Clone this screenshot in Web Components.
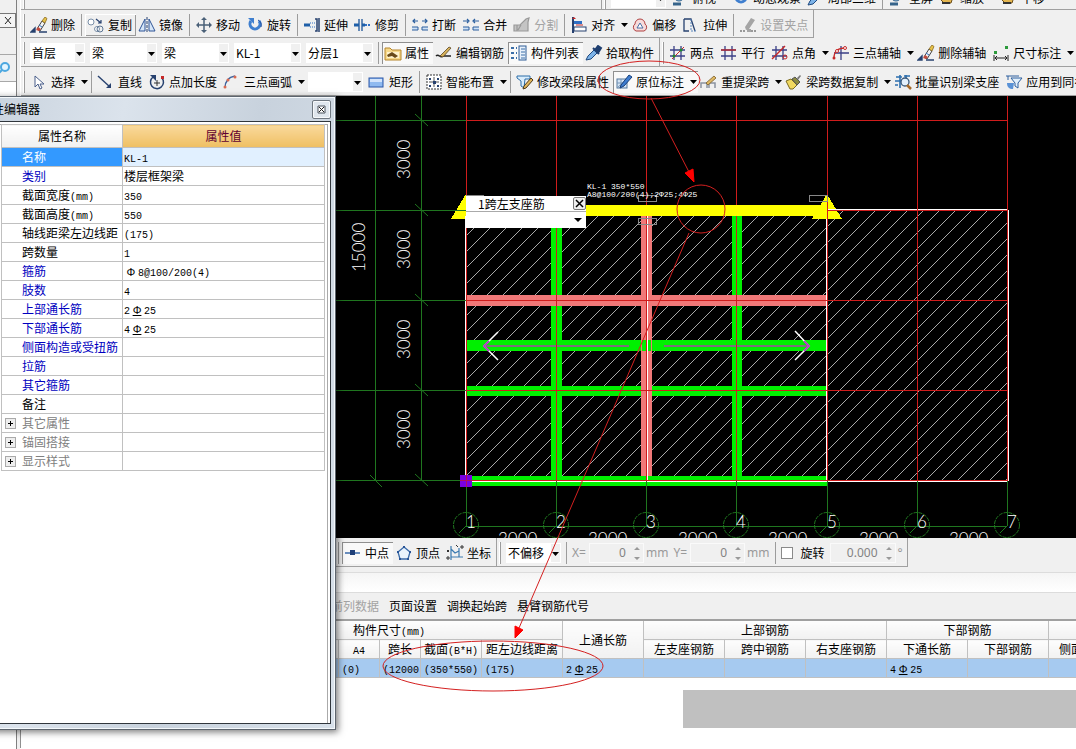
<!DOCTYPE html>
<html lang="zh-CN">
<head>
<meta charset="utf-8">
<title>属性编辑器</title>
<style>
body{margin:0;background:#fff;color:#000;font:12px/16px "Noto Sans CJK SC","Noto Sans",sans-serif}
</style>
</head>
<body>
<cad-app></cad-app>
<script>
const define=(name,html,setup)=>customElements.define(name,class extends HTMLElement{
  constructor(){super();const t=document.createElement('template');t.innerHTML=html;
    this.attachShadow({mode:'open'}).append(t.content.cloneNode(true));}
  connectedCallback(){if(!this.ready){this.ready=true;if(setup)setup.call(this,this.shadowRoot);}}
});

/* ---------- icons, all on an 18 x 16 grid ---------- */
const N='#27416f',B='#2f6fc4',R='#c62828',G='#999';
const brush=`<path d="M1 15l4-4v4zM9 15h8" fill="${N}" stroke="${N}" stroke-width="1.4"/><path d="M7 12l5-8 3 2-5 8z" fill="#f4f4f4" stroke="#444"/><path d="M12 4l3-4 2 1.500-2 4.500z" fill="#e6c34a" stroke="#8a6a20" stroke-width=".8"/><path d="M8 10l3 2-2 2-3-1z" fill="#c44a3c"/><path d="M9 8l3 2" stroke="${B}"/>`;
const hash=`<path d="M5 1v14M12 1v14M1 5h15M1 11h15" stroke="#3a3f86" stroke-width="1.300"/>`;
const ICONS={
 erase:brush,
 copy:`<circle cx="4" cy="5" r="3" fill="#fff" stroke="#7a8fa8"/><circle cx="10" cy="12" r="2.500" fill="#fff" stroke="#7a8fa8"/><circle cx="13" cy="12" r="3" fill="none" stroke="#5d7694"/><path d="M9 2l5 4M14 3v3h-3" fill="none" stroke="${N}" stroke-width="1.200"/>`,
 mirror:`<path d="M7 2v12H1zM11 2v12h6z" fill="#d6e6f8" stroke="#2f5597"/><path d="M9 0v16" stroke="#27416f" stroke-dasharray="3 1"/>`,
 move:`<path d="M9 1v14M2 8h14" stroke="#4a6078" stroke-width="1.500"/><path d="M9 0l3 3H6zM9 16l3-3H6zM1 8l3-3v6zM17 8l-3-3v6z" fill="#4a6078"/>`,
 rotate:`<path d="M5 4a5 5 0 1 0 8 0" fill="none" stroke="#3f7fcf" stroke-width="3"/><path d="M2 1h6v6z" fill="#3f7fcf"/><path d="M12 3a6 6 0 0 1 3 7" fill="none" stroke="#1f4f9f"/>`,
 extend:`<path d="M1 8h6" stroke="#1f5fa8" stroke-width="3"/><path d="M7 6h5M7 10h5" stroke="${B}" stroke-dasharray="1 1"/><path d="M12 2h2v12h-2M16 1v14" fill="none" stroke="${N}" stroke-width="1.500"/>`,
 trim:`<path d="M5 2v12M8 2v12" stroke="#2c5f9e" stroke-width="1.400"/><path d="M0 8h5M8 8h3" stroke="#1f5fa8" stroke-width="3"/><path d="M11 8h6" stroke="${B}" stroke-width="2" stroke-dasharray="2 1"/>`,
 brk:`<path d="M2 4h5M11 4h5M4 2L2 4l2 2M14 2l2 2-2 2" fill="none" stroke="#2c5f9e" stroke-width="1.200"/><path d="M1 10h6v3H1M17 10h-6v3h6" fill="#cfe2f6" stroke="#2c5f9e"/>`,
 merge:`<path d="M1 4h5M12 4h5M5 2l2 2-2 2M13 2l-2 2 2 2" fill="none" stroke="#2c5f9e" stroke-width="1.200"/><path d="M1 10h6v3H1M17 10h-6v3h6" fill="#cfe2f6" stroke="#2c5f9e"/>`,
 split:`<path d="M1 8h6l6-6 3-1-1 4v9H1zM4 8v6M8 8l-3 5" fill="#c4c4c4" stroke="${G}" stroke-width="1.200"/>`,
 align:`<path d="M3 0v16" stroke="${N}" stroke-width="2"/><path d="M2 2l2-2 2 2z" fill="${R}"/><rect x="4" y="4" width="8" height="3" fill="${B}"/><rect x="4" y="10" width="12" height="4" fill="#fff" stroke="${N}"/><path d="M6 8h7" stroke="${R}"/>`,
 offset:`<path d="M5 14a4 4 0 0 1-1-7 5 5 0 0 1 10 0 4 4 0 0 1-1 7z" fill="#f6dcdc" stroke="#b04040"/><path d="M6 11l3-5 3 5z" fill="#fff" stroke="#4a6fa5"/>`,
 stretch:`<path d="M2 2v12h5M2 2h7l4 12" fill="none" stroke="${N}" stroke-width="1.300"/><path d="M9 2v12h6" fill="none" stroke="#5b86bd" stroke-dasharray="2 1"/>`,
 grip:`<path d="M1 14h5M12 14h5" stroke="${G}" stroke-dasharray="2 1" stroke-width="2"/><path d="M6 10l6-9 4 2-6 9-3 1zM8 12h4v3H8z" fill="#a5a5a5"/>`,
 prop:`<path d="M1 3h5l2 2h9v10H1z" fill="#f7d98a" stroke="#b5852c"/><rect x="3" y="7" width="12" height="6" fill="#fff3cd"/><path d="M3 10l5-3 6 4-3 2-3-2-4 1z" fill="#6a4b1a"/>`,
 pen:`<path d="M1 11c3-3 4 3 7 0h8" fill="none" stroke="#222" stroke-width="1.500"/><path d="M5 11l9-9 2 1-8 9z" fill="#d7b25a" stroke="#5a4522" stroke-width=".8"/>`,
 list:`<path d="M1 3h3M1 8h3M1 13h3M6 3h1M6 8h1M6 13h1" stroke="#3b6ea8" stroke-width="2"/><rect x="9" y="1" width="7" height="14" fill="#e8f1fb" stroke="#2f5d96"/><path d="M11 4h4M11 7h4M11 10h4M11 13h4" stroke="#3b6ea8"/>`,
 pick:`<path d="M1 15l2-4 6-6 3 3-6 6z" fill="#7db3e8" stroke="#1f4a80"/><path d="M8 3l6 6M10 5l3-4 3 2-3 5z" fill="#1f3f70" stroke="#1f3f70" stroke-width="2"/>`,
 two:hash+`<path d="M3 14L15 2" stroke="${R}"/><circle cx="5" cy="11" r="1.500" fill="#1c8a2c"/><circle cx="12" cy="5" r="1.500" fill="#1c8a2c"/>`,
 par:hash+`<path d="M1 5h15" stroke="${R}" stroke-width="1.300"/>`,
 ang:hash+`<path d="M1 14L14 1" stroke="${R}" stroke-width="1.500"/><circle cx="14" cy="12" r="2" fill="none" stroke="${R}"/>`,
 arc3:`<path d="M9 1v14M2 8h15" stroke="#3a3f86" stroke-width="1.300"/><path d="M2 13c0-7 4-10 11-10" fill="none" stroke="${R}" stroke-width="1.300"/><circle cx="2" cy="13" r="1.500" fill="${R}"/><circle cx="13" cy="3" r="1.500" fill="#fff" stroke="${R}"/><circle cx="5" cy="6" r="1.500" fill="#fff" stroke="${R}"/>`,
 dim:`<rect x="2" y="6" width="3" height="3" fill="#2c9a3c"/><rect x="13" y="1" width="3" height="3" fill="#2c9a3c"/><path d="M2 10v6M16 10v6M3 13h12M5 11l-2 2 2 2M13 11l2 2-2 2" fill="none" stroke="#222"/>`,
 cursor:`<path d="M5 2v11l3-3 2 5 2-1-2-4h4z" fill="#fff" stroke="#4a5f8a"/>`,
 line:`<path d="M1 2l12 11" stroke="${N}" stroke-width="1.400"/><path d="M14 9v5H9z" fill="${N}"/>`,
 ptlen:`<path d="M5 3a6.500 6.500 0 1 0 9 1" fill="none" stroke="#27416f" stroke-width="1.500"/><path d="M2 1h6v6z" fill="#27416f"/><path d="M9 6v6M6 9h6" stroke="#333"/><rect x="13" y="2" width="3" height="3" fill="${R}"/>`,
 arc:`<path d="M2 14C2 7 6 3 12 2" fill="none" stroke="#3f66a0" stroke-width="1.400"/><circle cx="2" cy="13" r="1.500" fill="#d86a52"/><circle cx="5" cy="6" r="1.500" fill="#d86a52"/><circle cx="12" cy="3" r="1.500" fill="#d86a52"/>`,
 rect:`<rect x="1" y="4" width="14" height="9" fill="#8fbaf0" stroke="#2a56a8"/><path d="M2 5h12v3H2z" fill="#d3e4fb"/>`,
 smart:`<rect x="2" y="1" width="14" height="14" fill="#fff" stroke="#333" stroke-dasharray="2 1"/><path d="M9 3v10M4 8h10" stroke="#555"/><path d="M4 4h2v2H4zM12 4h2v2h-2zM4 11h2v2H4zM12 11h2v2h-2zM8 7h3v3H8z" fill="${N}"/>`,
 edit:`<path d="M1 2h13v3H9l-1 9-3-2V7L1 4z" fill="#d8ecfb" stroke="#2b6ca8"/><path d="M8 12l7-8 2 2-7 8-3 1z" fill="#e1b55a" stroke="#4c3a1a"/>`,
 insitu:`<rect x="2" y="5" width="10" height="9" fill="#d5e4f5" stroke="#55789e"/><path d="M2 14L12 5M2 9h10M6 5v9" stroke="#7797b8"/><path d="M6 11l8-10 3 2-8 9-4 2z" fill="#3d7cd0" stroke="#173f7a"/>`,
 respan:`<path d="M1 14V9h6v5M9 14V9h6v5" fill="none" stroke="#8a93a0" stroke-width="1.500"/><path d="M6 9l8-7 2 2-8 7z" fill="#dfb964" stroke="#7a5d28" stroke-width=".8"/>`,
 broom:`<path d="M1 7l5-2 6 6-4 4-3 0z" fill="#f0d860" stroke="#7a6a20"/><path d="M7 5l3-2 5 5-3 3z" fill="#8a8a40" stroke="#555"/><path d="M12 4l3-3 1 1-3 4z" fill="#777"/>`,
 batch:`<path d="M2 3h6M10 2h6M1 7h7M1 11h3M6 1v13M12 1v3" stroke="#2c6fae" stroke-width="1.600"/><circle cx="11" cy="8" r="4" fill="#e4f1fc" stroke="#39587a" stroke-width="1.300"/><path d="M13 11l4 4" stroke="#a86a28" stroke-width="2.500"/>`,
 apply:`<path d="M1 2h13M3 2v4M6 4h11l-4 5v5l-3-2V9z" fill="#e2f0fc" stroke="#2c5f9e"/><path d="M2 9l7 0-1 6c-4 0-6-2-6-6z" fill="#5a92d6"/>`,
 mid:`<path d="M1 8h15" stroke="#3a6aa8" stroke-width="1.500"/><rect x="6" y="5" width="5" height="5" fill="#1f3f78"/>`,
 vertex:`<path d="M9 2l6 5-2 7H5L3 7z" fill="#eaf3fc" stroke="#3a6aa8" stroke-width="1.300"/><path d="M8 1h2v2H8zM2 6h2v2H2zM14 6h2v2h-2zM4 13h2v2H4zM12 13h2v2h-2z" fill="#2a5597"/>`,
 coord:`<path d="M5 1v14M5 12h12M13 3v9M5 4l4 4 4-2" fill="none" stroke="#3a7ab0" stroke-width="1.200"/><path d="M1 5l2 2M3 5L1 7M10 0l2 2M1 12h2v2H1zM15 1h2v2h-2z" fill="none" stroke="#333"/>`,
 sight:`<circle cx="8" cy="6" r="5" fill="#9cc8ea" stroke="#36648b"/><path d="M2 14h8" stroke="#36648b" stroke-width="3"/>`,
 gold:`<path d="M2 10l5-6 7 3-2 6H5z" fill="#e4b650" stroke="#6b4d18"/><path d="M3 13h8" stroke="#333" stroke-width="2"/>`
};
define('ui-icon',`<style>:host{display:block;flex:none;width:18px;height:16px}svg{display:block}</style><svg width="18" height="16" fill="none" aria-hidden="true"></svg>`,
 function(s){s.querySelector('svg').innerHTML=ICONS[this.getAttribute('name')]||'';});

/* ---------- toolbar parts ---------- */
define('tool-button',`<style>
:host{display:block;flex:none}
button{display:flex;align-items:center;gap:3px;height:22px;margin:0;border:0;padding:0 4px 0 2px;background:none;color:inherit;font:inherit;white-space:nowrap}
button:disabled{color:#a3a3a3}
svg{display:none;margin-left:1px}
:host([menu]) svg{display:block}:host([menu]) button{padding-right:0}
:host([raised]) button{box-shadow:inset 1px 1px #fff,inset -1px -1px #9a9a9a}
:host([pressed]) button{background:#f9f9f9;box-shadow:inset 1px 1px #8f8f8f}
</style><button type="button"><ui-icon></ui-icon><span><slot></slot></span><svg width="10" height="6"><path d="M2 1h7L5.500 5z" fill="#000"/></svg></button>`,
 function(s){const i=document.createElement('ui-icon');i.setAttribute('name',this.getAttribute('icon'));s.querySelector('ui-icon').replaceWith(i);
  s.querySelector('button').disabled=this.hasAttribute('off');});
define('tool-select',`<style>
:host{display:grid;flex:none;width:67px;height:20px;margin:0 3px 0 2px;background:#fff}
:host([size=s]){width:55px}
select,svg{grid-area:1/1}
select{appearance:none;width:100%;min-width:0;margin:0;border:0;padding:0 12px 0 2px;background:none;color:#000;font:inherit}
svg{justify-self:end;pointer-events:none}
</style><select><option></option></select><svg width="10" height="20"><path d="M0 1h9v18H0z" fill="#f0f0f0"/><path d="M1 9h7L4.500 13z" fill="#000"/></svg>`,
 function(s){s.querySelector('select').setAttribute('aria-label',this.getAttribute('label'));s.querySelector('option').textContent=this.getAttribute('value')||'';});
define('tool-sep',`<style>:host{display:block;flex:none;width:1px;height:22px;margin:0 3px 0 2px;background:#9c9c9c}</style>`);
define('tool-bar',`<style>
:host{display:flex;flex:none;align-items:center;box-sizing:border-box;padding:2px 1px 0 3px;border-bottom:1px solid #a0a0a0;border-right:1px solid #a0a0a0}
:host([open]){flex:1 0 auto;border-right:0}
i{width:1px;height:22px;margin-right:3px;background:#9c9c9c;box-shadow:-1px 0 #fff}
</style><i></i><slot></slot>`);
define('number-box',`<style>
:host{display:grid;flex:none;width:55px;height:20px;border:1px solid #fafafa;box-sizing:border-box}
:host([wide]){width:66px}
input,svg{grid-area:1/1}
input{width:100%;min-width:0;box-sizing:border-box;border:0;margin:0;padding:0 17px 0 0;background:none;color:#838383;font:12px/16px "Noto Sans",sans-serif;text-align:right}
svg{justify-self:end}
</style><input disabled><svg width="12" height="18"><path d="M3 6l3-3 3 3zM3 13l3 3 3-3z" fill="#999"/></svg>`,
 function(s){const i=s.querySelector('input');i.value=this.getAttribute('value');i.setAttribute('aria-label',this.getAttribute('label'));});

define('top-tools',`<style>
:host{display:block;background:#f0f0f0;border-left:1px solid #fff;overflow:hidden}
div{display:flex;height:29px}
.cut{height:10px;align-items:flex-end}.cut tool-bar{height:26px}
.cut tool-bar:first-child{width:581px}
.r1{height:28px}
</style>
<div class="cut"><tool-bar></tool-bar>
<tool-bar open><tool-select size="s" label="视图"></tool-select><tool-button icon="sight" menu>俯视</tool-button><tool-button icon="rotate">动态观察</tool-button><tool-button icon="pick">局部三维</tool-button><tool-sep></tool-sep><tool-button icon="sight">全屏</tool-button><tool-button icon="gold" menu>缩放</tool-button><tool-button icon="gold" menu>平移</tool-button></tool-bar></div>
<div class="r1"><tool-bar><tool-button icon="erase">删除</tool-button><tool-sep></tool-sep><tool-button icon="copy" raised>复制</tool-button><tool-button icon="mirror">镜像</tool-button><tool-sep></tool-sep><tool-button icon="move">移动</tool-button><tool-button icon="rotate">旋转</tool-button><tool-sep></tool-sep><tool-button icon="extend">延伸</tool-button><tool-button icon="trim">修剪</tool-button><tool-sep></tool-sep><tool-button icon="brk">打断</tool-button><tool-button icon="merge">合并</tool-button><tool-button icon="split" off>分割</tool-button><tool-sep></tool-sep><tool-button icon="align" menu>对齐</tool-button><tool-button icon="offset">偏移</tool-button><tool-button icon="stretch">拉伸</tool-button><tool-sep></tool-sep><tool-button icon="grip" off>设置夹点</tool-button></tool-bar></div>
<div><tool-bar><tool-select size="s" label="楼层" value="首层"></tool-select><tool-select label="构件类别" value="梁"></tool-select><tool-select label="构件类型" value="梁"></tool-select><tool-select label="构件" value="KL-1"></tool-select><tool-select label="分层" value="分层1"></tool-select><tool-sep></tool-sep><tool-button icon="prop" pressed>属性</tool-button><tool-button icon="pen">编辑钢筋</tool-button><tool-button icon="list" pressed>构件列表</tool-button><tool-button icon="pick">拾取构件</tool-button></tool-bar>
<tool-bar open><tool-button icon="two">两点</tool-button><tool-button icon="par">平行</tool-button><tool-button icon="ang" menu>点角</tool-button><tool-button icon="arc3" menu>三点辅轴</tool-button><tool-button icon="erase">删除辅轴</tool-button><tool-button icon="dim" menu>尺寸标注</tool-button></tool-bar></div>
<div><tool-bar open><tool-button icon="cursor" menu>选择</tool-button><tool-sep></tool-sep><tool-button icon="line">直线</tool-button><tool-button icon="ptlen">点加长度</tool-button><tool-button icon="arc" menu>三点画弧</tool-button><tool-select size="s" label="半径"></tool-select><tool-button icon="rect">矩形</tool-button><tool-sep></tool-sep><tool-button icon="smart" menu>智能布置</tool-button><tool-sep></tool-sep><tool-button icon="edit">修改梁段属性</tool-button><tool-button icon="insitu" menu pressed>原位标注</tool-button><tool-button icon="respan" menu>重提梁跨</tool-button><tool-button icon="broom" menu>梁跨数据复制</tool-button><tool-button icon="batch">批量识别梁支座</tool-button><tool-button icon="apply">应用到同名梁</tool-button></tool-bar></div>`);

define('side-dock',`<style>
:host{display:flex;flex-direction:column;flex:none;width:16px;border-right:1px solid #808080;margin-right:3px;background:#fff}
header{display:flex;justify-content:flex-end;height:28px;box-sizing:border-box;padding-top:13px;background:#f0f0f0}
button{width:17px;height:15px;margin:0;padding:0;border:1px solid #777;background:#f4f4f4}
div{height:26px;background:#f0f0f0;border-bottom:1px solid #a8a8a8}
svg{display:block}
</style><header><button type="button" aria-label="关闭"><svg width="15" height="13"><path d="M5 3l6 7M11 3l-6 7" stroke="#222" fill="none"/></svg></button></header><div></div>
<div><svg width="16" height="26"><circle cx="5" cy="12" r="4" fill="#e4f5ff" stroke="#4da8e0" stroke-width="2"/><path d="M2 15l-3 3" stroke="#4da8e0" stroke-width="2"/></svg></div>`);

/* ---------- drawing area ---------- */
define('input-hint',`<style>
:host{display:block;width:120px;background:#fff}
header{display:flex;align-items:center;justify-content:space-between;height:15px;padding-left:12px;border-bottom:1px solid #aaa}
button{display:block;width:13px;height:13px;margin:0;padding:0;border:1px solid #777;border-radius:2px;background:#eee}
svg{display:block}
.v{display:grid;height:16px}.v>*{grid-area:1/1}
select{appearance:none;border:0;margin:0;background:none;font:inherit;width:100%}
.v svg{justify-self:end;align-self:center;pointer-events:none}
</style><header><label for="v">1跨左支座筋</label><button type="button" aria-label="关闭"><svg width="11" height="11"><path d="M2 2l7 7M9 2l-7 7" stroke="#000" stroke-width="1.500"/></svg></button></header>
<div class="v"><select id="v"><option></option></select><svg width="12" height="8"><path d="M0 2h8L4 6z"/></svg></div>`);
define('cad-canvas',`<style>
:host{display:block;position:relative;height:442px;background:#000;overflow:hidden}
svg{display:block;width:100%;height:442px}
input-hint{position:absolute;left:445px;top:100px}
.n{font:300 17px Lato,sans-serif;fill:#fff}
.s{font:8px "Liberation Mono",monospace;fill:#fff}
.c{shape-rendering:crispEdges}
</style><svg fill="none"></svg><input-hint></input-hint>`,function(s){
 const X=[466,556,646,736,827,917,1007],Y=[120,210,300,390,480];
 const GR='#1f761f',RD='#d01c1c';let o='',h='';
 for(let c=676+10;c<1500;c+=16)h+=`M${c-480} 480L${c-210} 210`;
 o+=`<clipPath id="slab"><path d="M466 210h542v271h-542z"/></clipPath><path class="c" clip-path="url(#slab)" d="${h}" stroke="#a8a8a8"/>`;
 o+=`<g class="c">`;
 o+=`<path d="M551 216h11v264h-11zM732 216h10v264h-10zM466 340h361v11H466zM466 386h361v10H466zM466 476h361v10H466z" fill="#00f000"/>`;
 o+=`<path d="M641 216h11v260h-11zM466 295h361v11H466z" fill="#f07878"/><path d="M642 340h9v11h-9z" fill="#00f000"/>`;
 o+=`<path d="M484 346h145M664 346h144" stroke="#7c707c" stroke-width="2"/>`;
 o+=`<path d="M466 205h361v11H466zM827 194l15 25h-30zM466 194v25h-15z" fill="#ff0"/>`;
 o+=`<path d="M465.500 216v264M647.500 216v264M826.500 219v262M1008.500 210v271M827 209.500h181M466 481.500h542" stroke="#fff"/>`;
 X.forEach((x,i)=>{const a=i>0&&i<4?`M${x}.500 96V205M${x}.500 216V480`:`M${x}.500 96V480`;
  o+=`<path d="${a}" stroke="${RD}"/><path d="M${x}.500 481V525" stroke="${GR}"/>`;});
 Y.forEach((y,i)=>{const a=i===1?`M827 ${y}.500H1008`:`M466 ${y}.500H1008`;
  o+=`<path d="${a}" stroke="${RD}"/><path d="M336 ${y}.500H466" stroke="${GR}"/>`;});
 o+=`<path d="M375.500 96V480M421.500 96V480M466 526.500H1007" stroke="${GR}"/>`;
 o+=`<path d="M638.500 195.500h18v6h-18zM638.500 218.500h18v6h-18zM809.500 195.500h18v6h-18zM466 195.500h18" stroke="#888"/>`;
 o+=`<path d="M460 475h12v12h-12z" fill="#7a00e0"/><path d="M466.500 475v12M460 480.500h12" stroke="#b01060"/></g>`;
 o+=`<path d="M498 332l-14 14 14 14M795 331l14 15-14 14" stroke="#fff" stroke-width="1.500"/><path d="M489 341l-5 5 5 5M804 341l5 5-5 5" stroke="#b040c0" stroke-width="2"/>`;
 Y.forEach(y=>o+=`<path d="M415 ${y-6}l13 12" stroke="${GR}"/>`);
 o+=`<path d="M370 475l12 12" stroke="${GR}"/>`;
 X.forEach((x,i)=>{o+=`<circle cx="${x}" cy="525" r="12.500" stroke="${GR}" stroke-dasharray="4 1"/><path d="M${x-7} 533l8-8" stroke="${GR}"/><text class="n" x="${x}" y="528">${i+1}</text>`;
  if(i<6)o+=`<text class="n" x="${x+32}" y="545">3000</text>`;});
 [179,269,359,449].forEach(y=>o+=`<text class="n" transform="translate(410 ${y}) rotate(-90)">3000</text>`);
 o+=`<text class="n" transform="translate(365 272) rotate(-90)">15000</text>`;
 o+=`<text class="s" x="587" y="189">KL-1 350*550</text><text class="s" x="587" y="197">A8@100/200(4);2Φ25;4Φ25</text>`;
 s.querySelector('svg').innerHTML=`<g transform="translate(-21 -96)">${o}</g>`;
});

/* ---------- snapping bar ---------- */
define('snap-bar',`<style>
:host{display:flex;height:29px;padding-left:314px;background:#f0f0f0;color:#000}
tool-bar{height:29px}
.g{color:#999;font-family:"Noto Sans",sans-serif;margin:0 3px 0 2px}
label{display:flex;align-items:center;gap:8px;margin:0 5px 0 2px}
input{appearance:none;width:12px;height:12px;margin:0;border:1px solid #8a8a8a;background:#fff}
</style><tool-bar><tool-button icon="mid" pressed>中点</tool-button><tool-button icon="vertex">顶点</tool-button><tool-button icon="coord">坐标</tool-button></tool-bar>
<tool-bar><tool-select size="s" label="偏移方式" value="不偏移"></tool-select><tool-sep></tool-sep><span class="g">X=</span><number-box label="X" value="0"></number-box><span class="g">mm</span><span class="g">Y=</span><number-box label="Y" value="0"></number-box><span class="g">mm</span><tool-sep></tool-sep><label><input type="checkbox">旋转</label><number-box wide label="角度" value="0.000"></number-box><span class="g">°</span></tool-bar>`);

/* ---------- text helper: half-width runs use the mono face ---------- */
const fmt=t=>t.replace(/[\x20-\x7e]+|Φ|ф/g,m=>m==='Φ'?'<span class="f">Φ</span>':m==='ф'?'<span class="f"><u>Φ</u></span>':`<span class="m">${m}</span>`);
const RUNS=`.m{font:10px/10px "Liberation Mono",monospace}.f{display:inline-block;width:14px;text-align:center;font:11px/12px "Liberation Sans",sans-serif}u{text-underline-offset:1px}`;

define('span-panel',`<style>
:host{display:block;overflow:hidden}
.gap{height:5px;background:#f0f0f0;border-bottom:1px solid #dcdcdc}
.tabs{height:19px;background:linear-gradient(#f5f5f5,#fff);border-bottom:1px solid #dcdcdc}
nav{display:flex;align-items:center;gap:10px;height:26px;padding-left:310px;background:#f0f0f0;border-bottom:2px solid #a0a0a0}
nav button{border:0;margin:0;padding:0;background:none;color:#000;font:inherit}
nav button:disabled{color:#a3a3a3}
table{width:1109px;border-collapse:collapse;table-layout:fixed}
th,td{height:18px;padding:0;border:1px solid #c0c0c0;border-top:0;font-weight:400;line-height:18px;white-space:nowrap;overflow:hidden}
th{background:linear-gradient(#fdfdfd,#f1f1f1)}
td{background:#a6caf0;padding-left:3px}
footer{height:38px;margin:12px 0 20px 662px;background:#c0c0c0}
${RUNS}</style><div class="gap"></div><div class="tabs"></div>
<nav><button type="button" disabled>前列数据</button><button type="button">页面设置</button><button type="button">调换起始跨</button><button type="button">悬臂钢筋代号</button></nav>
<table></table><footer></footer>`,function(s){
 const w=[194,41,41,41,41,41,61,81,81,81,81,81,81,81,81];
 const th=(t,a='')=>`<th ${a}>${fmt(t)}</th>`;
 s.querySelector('table').innerHTML=`<colgroup>${w.map(x=>`<col style="width:${x}px">`).join('')}</colgroup><thead><tr>${th('','rowspan="2"')}${th('构件尺寸(mm)','colspan="7"')}${th('上通长筋','rowspan="2"')}${th('上部钢筋','colspan="3"')}${th('下部钢筋','colspan="2"')}${th('')}</tr><tr>${['','','','A4','跨长','截面(B*H)','距左边线距离','左支座钢筋','跨中钢筋','右支座钢筋','下通长筋','下部钢筋','侧面通长筋'].map(t=>th(t)).join('')}</tr></thead><tbody><tr>${['','','','','(0)','(12000','(350*550)','(175)','2ф25','','','','4ф25','',''].map(t=>`<td>${fmt(t)}</td>`).join('')}</tr></tbody>`;
});

/* ---------- floating property editor ---------- */
define('property-window',`<style>
:host{display:block;box-sizing:border-box;width:348px;height:634px;padding:0 4px 4px 0;border:1px solid #5d656e;background:linear-gradient(100deg,#c9d3de,#dbe3ec 30%,#c8d2dd 60%,#d8e1ea);box-shadow:inset 0 0 0 1px #f4f8fb,2px 2px 7px #0008}
header{display:flex;align-items:center;justify-content:space-between;height:24px;padding-left:3px}
button{width:19px;height:19px;margin:0;padding:0;border:1px solid #6f7881;border-radius:2px;background:#dfe6ed;box-shadow:inset 0 0 0 1px #f6f8fa}
svg{display:block;margin:auto}
section{box-sizing:border-box;height:603px;padding:2px 2px 0 11px;border:1px solid #30363c;box-shadow:inset -2px 2px #fff,inset -3px 3px #aaa;background:#fff}
table{width:324px;border-collapse:collapse;table-layout:fixed}
th{height:22px;padding:0;border:1px solid #c0c0c0;font-weight:400;background:linear-gradient(#fff,#f0f0f0)}
th+th{background:linear-gradient(#f9d99c,#efbf62);color:#600030}
td{height:18px;padding:0 0 0 1px;border:1px solid #c0c0c0;line-height:18px;white-space:nowrap;overflow:hidden}
td.k{padding-left:20px}
.b{color:#0000c0}.d{color:#808080}
tr.on .k{background:#3399ff;color:#fff}tr.on td{background:#e1f0ff}
.d i{display:inline-block;box-sizing:border-box;width:11px;height:11px;margin:0 6px 0 -17px;border:1px solid #aaa;background:linear-gradient(#000,#000) 2px 4px/5px 1px no-repeat,linear-gradient(#000,#000) 4px 2px/1px 5px no-repeat,#eee;vertical-align:-1px}
${RUNS}</style><header><span>性编辑器</span><button type="button" aria-label="关闭"><svg width="9" height="9"><path d="M1 1h7v7H1z" stroke="#4a535c" fill="#fff"/><path d="M2 2l5 5M7 2L2 7" stroke="#222"/></svg></button></header>
<section><table></table></section>`,function(s){
 const rows=[['名称','KL-1','on'],['类别','楼层框架梁','b'],['截面宽度(mm)','350'],['截面高度(mm)','550'],['轴线距梁左边线距',' (175)'],['跨数量','1'],['箍筋','Φ8@100/200(4)','b'],['肢数','4','b'],['上部通长筋','2ф25','b'],['下部通长筋','4ф25','b'],['侧面构造或受扭筋','','b'],['拉筋','','b'],['其它箍筋','','b'],['备注',''],['其它属性','','d'],['锚固搭接','','d'],['显示样式','','d']];
 s.querySelector('table').innerHTML=`<colgroup><col style="width:121px"><col></colgroup><thead><tr><th>属性名称</th><th>属性值</th></tr></thead><tbody>${rows.map(([k,v,c=''])=>`<tr class="${c==='on'?c:''}"><td class="k ${c}">${c==='d'?'<i></i>':''}${fmt(k)}</td><td>${fmt(v)}</td></tr>`).join('')}</tbody>`;
});

/* ---------- red guide marks over the page ---------- */
define('guide-marks',`<style>:host{display:block;pointer-events:none}svg{display:block}</style>
<svg width="760" height="749" fill="none" stroke="#d42020"><ellipse cx="649" cy="80" rx="51" ry="19"/><path d="M651 98l38 74"/><circle cx="701" cy="209" r="24"/><path d="M689 233L519 628"/><ellipse cx="493" cy="666" rx="110" ry="25"/><path d="M694 182l-9-9 8-4zM515 638l0-12 8 4z" fill="#f00" stroke="#f00"/></svg>`);

define('cad-app',`<style>
:host{display:flex;position:relative;min-height:100vh;overflow:hidden;background:#f0f0f0}
main{flex:1;min-width:0;background:#fff}
.work{border-left:1px solid #909090}
property-window{position:absolute;left:-12px;top:96px}
guide-marks{position:absolute;left:0;top:0}
</style><side-dock></side-dock><main><top-tools></top-tools><div class="work"><cad-canvas></cad-canvas><snap-bar></snap-bar><span-panel></span-panel></div></main>
<property-window></property-window><guide-marks></guide-marks>`);
</script>
</body>
</html>
